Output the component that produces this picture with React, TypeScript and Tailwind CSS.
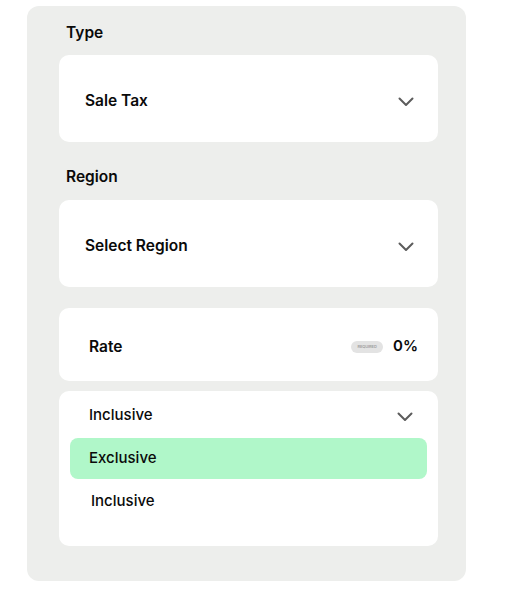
// chevron drawn to match the reference's short, wide V
function Chevron({ className = "" }: { className?: string }) {
  return (
    <svg width="16" height="10" viewBox="0 0 16 10" fill="none" className={className}>
      <path d="M1.5 1.5 L8 8 L14.5 1.5" stroke="#5c5c5c" strokeWidth="2" strokeLinecap="round" strokeLinejoin="round" />
    </svg>
  );
}

// a white select-like card with a bold value and a chevron
function SelectCard({ value }: { value: string }) {
  return (
    <div className="flex h-[87px] items-center justify-between rounded-[10px] bg-white pt-[4px] pl-[26px] pr-[24px]">
      <span className="text-[15.5px] font-semibold text-[#0a0a0a]">{value}</span>
      <Chevron className="mt-[2px]" />
    </div>
  );
}

export default function App() {
  return (
    <div
      className="min-h-[589px] bg-white pt-[6px] pl-[27px]"
      style={{ fontFamily: "Inter, 'Noto Sans', sans-serif" }}
    >
      <div className="flex w-[439px] flex-col rounded-[12px] bg-[#edeeec] pt-[16px] pb-[35px] pl-[32px] pr-[28px]">
        <div className="pl-[7px] text-[15.5px] leading-[22px] font-semibold text-[#0a0a0a]">Type</div>
        <div className="mt-[11px]">
          <SelectCard value="Sale Tax" />
        </div>

        <div className="mt-[24px] pl-[7px] text-[15.5px] leading-[22px] font-semibold text-[#0a0a0a]">Region</div>
        <div className="mt-[12px]">
          <SelectCard value="Select Region" />
        </div>

        {/* rate row */}
        <div className="mt-[21px] flex h-[73px] items-center justify-between rounded-[10px] bg-white pt-[4px] pl-[30px] pr-[20px]">
          <span className="text-[15.5px] font-semibold text-[#0a0a0a]">Rate</span>
          <div className="flex items-center gap-[10px]">
            <span className="flex h-[12px] w-[32px] items-center justify-center rounded-full bg-[#e3e3e3] text-[4px] font-semibold tracking-tight text-[#a0a0a0]">
              REQUIRED
            </span>
            <span className="text-[15px] font-semibold text-[#0a0a0a]">0%</span>
          </div>
        </div>

        {/* open dropdown */}
        <div className="mt-[10px] rounded-[10px] bg-white px-[11px] pt-[14px] pb-[24px]">
          <div className="flex h-[20px] items-center justify-between pl-[19px] pr-[14px]">
            <span className="text-[15px] font-medium text-[#0a0a0a]">Inclusive</span>
            <Chevron className="mt-[3px]" />
          </div>
          <div className="mt-[13px] flex h-[41px] items-center rounded-[8px] bg-[#b0f7c9] pl-[19px]">
            <span className="text-[15px] font-medium text-[#0a0a0a]">Exclusive</span>
          </div>
          <div className="mt-[2px] flex h-[41px] items-center pl-[21px]">
            <span className="text-[15px] font-medium text-[#0a0a0a]">Inclusive</span>
          </div>
        </div>
      </div>
    </div>
  );
}
